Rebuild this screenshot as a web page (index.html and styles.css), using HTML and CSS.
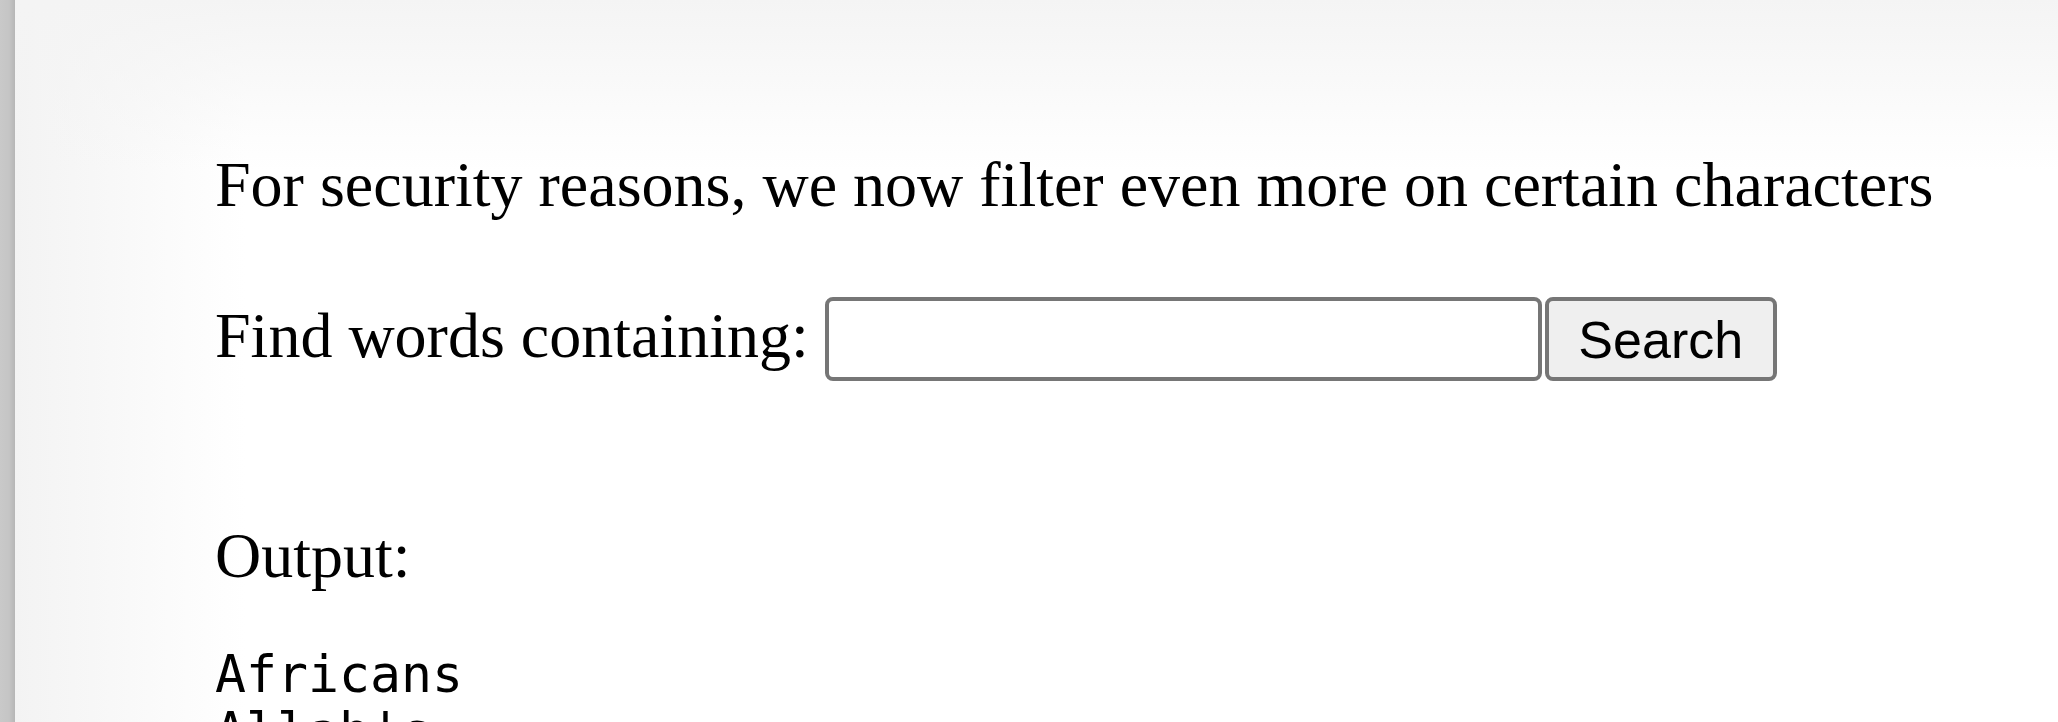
FILE: index.html
```html
<!DOCTYPE html>
<html>
<head>
<meta charset="utf-8">
<title>natas10</title>
<link rel="stylesheet" href="styles.css">
</head>
<body>
<div class="frame">
  <div class="edge"></div>
  <div class="page">
    <div class="content">
      <p class="intro">For security reasons, we now filter even more on certain characters</p>
      <form class="search">
        <label class="label" for="needle">Find words containing:</label>
        <input class="needle" id="needle" type="text" name="needle">
        <button class="submit" type="button">Search</button>
      </form>
      <div class="output-label">Output:</div>
      <pre class="output">Africans
Allah's
Allah
American
Americanism</pre>
    </div>
  </div>
</div>
</body>
</html>
```

FILE: styles.css
```css
html, body {
  margin: 0;
  padding: 0;
  background: #ffffff;
}

.frame {
  display: flex;
  width: 2058px;
  height: 722px;
  overflow: hidden;
}

.edge {
  flex: 0 0 15px;
  background: linear-gradient(to right, #c9c9c9 0px, #c5c5c5 9px, #b6b6b6 15px);
}

.page {
  flex: 1 1 auto;
  background:
    linear-gradient(to bottom, #f4f4f4 0px, rgba(244, 244, 244, 0) 170px),
    linear-gradient(to right, #f3f3f3 0px, rgba(243, 243, 243, 0) 230px),
    #ffffff;
}

.content {
  padding: 148px 0 0 200px;
  font-family: "Liberation Serif", "Times New Roman", serif;
  font-size: 64px;
  color: #000000;
}

.intro {
  margin: 0;
  line-height: 74px;
  white-space: nowrap;
}

.search {
  display: flex;
  align-items: flex-start;
  margin: 75px 0 0 0;
}

.label {
  margin-top: 2px;
  line-height: 74px;
  white-space: nowrap;
}

.needle {
  box-sizing: border-box;
  width: 717px;
  height: 84px;
  margin: 0 0 0 16px;
  padding: 0 8px;
  border: 4px solid #767676;
  border-radius: 8px;
  background: #ffffff;
  font-family: "Liberation Sans", Arial, sans-serif;
  font-size: 52px;
  outline: none;
}

.submit {
  box-sizing: border-box;
  width: 232px;
  height: 84px;
  margin: 0 0 0 3px;
  padding: 2px 0 0 0;
  border: 4px solid #767676;
  border-radius: 8px;
  background: #efefef;
  color: #000000;
  font-family: "Liberation Sans", Arial, sans-serif;
  font-size: 52px;
  line-height: 1;
}

.output-label {
  margin-top: 138px;
  line-height: 74px;
}

.output {
  margin: 53px 0 0 0;
  font-family: "DejaVu Sans Mono", monospace;
  font-size: 51.5px;
  line-height: 57px;
}
```
